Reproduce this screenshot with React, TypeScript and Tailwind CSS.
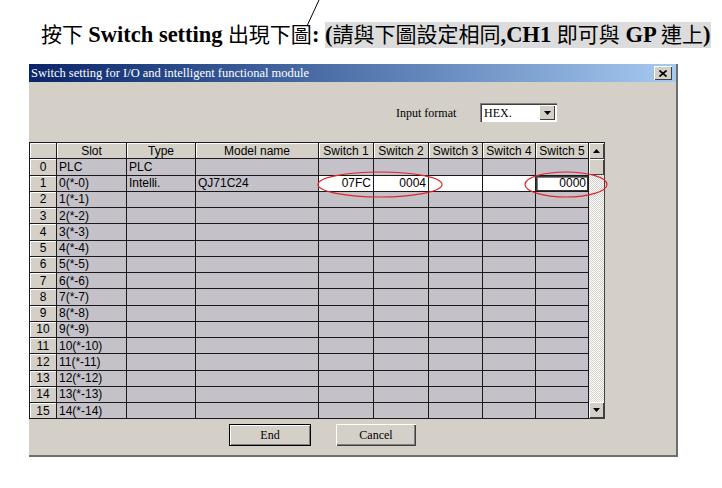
import React from "react";

const cols = "grid-cols-[27px_70px_69px_123px_55px_55px_54px_53px_53px]";
const headers = ["", "Slot", "Type", "Model name", "Switch 1", "Switch 2", "Switch 3", "Switch 4", "Switch 5"];

type Row = { slot: string; type?: string; model?: string; sw?: string[] };

const rows: Row[] = [
  { slot: "PLC", type: "PLC" },
  { slot: "0(*-0)", type: "Intelli.", model: "QJ71C24", sw: ["07FC", "0004", "", "", "0000"] },
  ...Array.from({ length: 14 }, (_, i) => ({ slot: `${i + 1}(*-${i + 1})` })),
];

function HeaderCell({ children }: { children?: React.ReactNode }) {
  return (
    <div className="flex items-center justify-center border-r border-b border-[#1a1a1a] bg-[#d4d0c8] shadow-[inset_1px_1px_0_#ffffff]">
      {children}
    </div>
  );
}

function Cell({ children, white, focus }: { children?: React.ReactNode; white?: boolean; focus?: boolean }) {
  return (
    <div
      className={`flex items-center overflow-hidden border-r border-b border-[#1a1a1a] px-[2px] ${
        white ? "bg-white justify-end" : "bg-[#c4c2c8]"
      } ${focus ? "shadow-[inset_0_0_0_1px_#3a3a3a,inset_2px_2px_0_#808080]" : ""}`}
    >
      {children}
    </div>
  );
}

function ScrollBtn({ up }: { up?: boolean }) {
  return (
    <div className="flex h-[16px] items-center justify-center bg-[#d4d0c8] shadow-[inset_1px_1px_0_#ffffff,inset_-1px_-1px_0_#404040]">
      <svg width="7" height="4" viewBox="0 0 7 4">
        {up ? <path d="M3.5 0 L7 4 L0 4 Z" fill="#000" /> : <path d="M0 0 L7 0 L3.5 4 Z" fill="#000" />}
      </svg>
    </div>
  );
}

function WinButton({ label, isDefault }: { label: string; isDefault?: boolean }) {
  return (
    <div
      className={`flex h-[22px] items-center justify-center bg-[#d4d0c8] font-['Liberation_Serif',serif] text-[12px] text-black ${
        isDefault
          ? "w-[82px] border border-black shadow-[inset_1px_1px_0_#ffffff,inset_-1px_-1px_0_#808080]"
          : "w-[80px] shadow-[inset_1px_1px_0_#ffffff,inset_-1px_-1px_0_#404040,inset_-2px_-2px_0_#808080]"
      }`}
    >
      {label}
    </div>
  );
}

export default function App() {
  return (
    <div className="relative h-[488px] w-[722px] overflow-hidden bg-white">
      <div className="flex h-[48px] items-end pl-[41px] font-['Liberation_Serif','Noto_Sans_CJK_TC',serif] text-black">
        <p className="whitespace-nowrap text-[21px] leading-[26px]">
          <span>按下 </span>
          <span className="text-[22.5px] font-bold">Switch setting</span>
          <span> 出現下圖</span>
          <span className="text-[22.5px] font-bold">: </span>
          <span className="bg-[#dcdcdc] py-[1px]">
            <span className="text-[22.5px] font-bold">(</span>
            請與下圖設定相同
            <span className="text-[22.5px] font-bold">,CH1 </span>
            即可與
            <span className="text-[22.5px] font-bold"> GP </span>
            連上
            <span className="text-[22.5px] font-bold">)</span>
          </span>
        </p>
      </div>

      <div className="ml-[29px] mt-[16px] flex h-[393px] w-[649px] flex-col border-r-2 border-b-2 border-[#6e6e6e] bg-[#d4d0c8]">
        <div className="flex h-[18px] items-center justify-between bg-gradient-to-r from-[#0a246a] to-[#a6caf0] pl-[2px] pr-[4px]">
          <span className="font-['Liberation_Serif',serif] text-[12.5px] leading-none text-white">
            Switch setting for I/O and intelligent functional module
          </span>
          <div className="flex h-[14px] w-[18px] items-center justify-center bg-[#d4d0c8] shadow-[inset_1px_1px_0_#ffffff,inset_-1px_-1px_0_#404040]">
            <svg width="8" height="7" viewBox="0 0 8 7">
              <path d="M0.5 0.5 L7.5 6.5 M7.5 0.5 L0.5 6.5" stroke="#000" strokeWidth="1.7" />
            </svg>
          </div>
        </div>

        <div className="ml-[367px] mt-[21px] flex h-[19px] items-center">
          <span className="w-[84px] font-['Liberation_Serif',serif] text-[12px] text-black">Input format</span>
          <div className="flex h-[19px] w-[77px] items-center bg-white shadow-[inset_1px_1px_0_#808080,inset_2px_2px_0_#404040,inset_-1px_-1px_0_#ffffff]">
            <span className="flex-1 pl-[4px] font-['Liberation_Serif',serif] text-[12px] text-black">HEX.</span>
            <div className="mr-[2px] flex h-[15px] w-[16px] items-center justify-center bg-[#d4d0c8] shadow-[inset_1px_1px_0_#ffffff,inset_-1px_-1px_0_#404040]">
              <svg width="7" height="4" viewBox="0 0 7 4">
                <path d="M0 0 L7 0 L3.5 4 Z" fill="#000" />
              </svg>
            </div>
          </div>
        </div>

        <div className="mt-[20px] flex h-[277px] w-[576px] border-l border-t border-[#1a1a1a] font-['Liberation_Sans',sans-serif] text-[12px] text-black">
          <div className={`grid ${cols} auto-rows-[16.25px]`}>
            {headers.map((h, i) => (
              <HeaderCell key={i}>{h}</HeaderCell>
            ))}
            {rows.map((r, i) => (
              <React.Fragment key={i}>
                <HeaderCell>{i}</HeaderCell>
                <Cell>{r.slot}</Cell>
                <Cell>{r.type}</Cell>
                <Cell>{r.model}</Cell>
                {[0, 1, 2, 3, 4].map((k) => (
                  <Cell key={k} white={!!r.sw} focus={!!r.sw && k === 4}>
                    {r.sw ? r.sw[k] : null}
                  </Cell>
                ))}
              </React.Fragment>
            ))}
          </div>
          <div className="flex w-[17px] flex-col border-r border-b border-[#404040] bg-[repeating-conic-gradient(#ffffff_0%_25%,#d4d0c8_0%_50%)] bg-[length:2px_2px]">
            <ScrollBtn up />
            <div className="h-[16px] bg-[#d4d0c8] shadow-[inset_1px_1px_0_#ffffff,inset_-1px_-1px_0_#404040]" />
            <div className="flex-1" />
            <ScrollBtn />
          </div>
        </div>

        <div className="ml-[200px] mt-[5px] flex gap-[25px]">
          <WinButton label="End" isDefault />
          <WinButton label="Cancel" />
        </div>
      </div>

      <svg className="pointer-events-none absolute left-0 top-0" width="722" height="488">
        <line x1="319" y1="0" x2="307" y2="26" stroke="#000" strokeWidth="1" />
        <ellipse cx="380" cy="184.5" rx="62" ry="12.5" fill="none" stroke="#e0242a" strokeWidth="1.2" />
        <ellipse cx="566" cy="184.5" rx="41" ry="12.5" fill="none" stroke="#e0242a" strokeWidth="1.2" />
      </svg>
    </div>
  );
}
